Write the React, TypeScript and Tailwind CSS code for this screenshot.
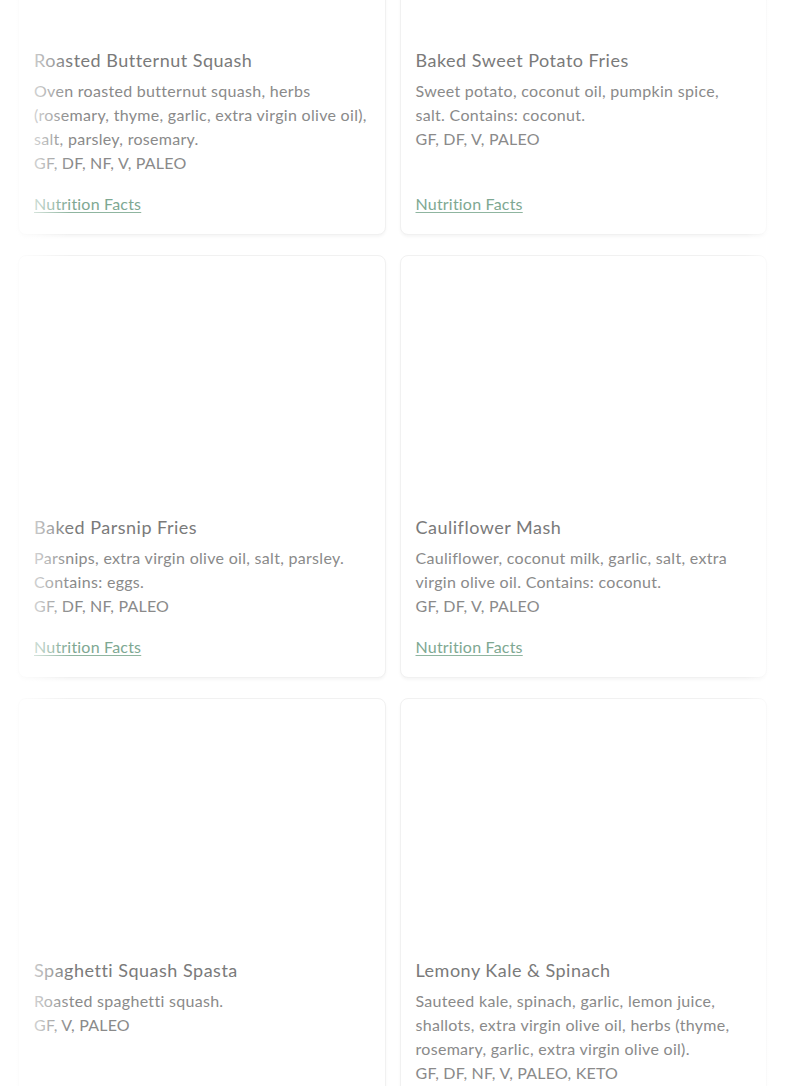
import React from 'react';

type Dish = {
  name: string;
  description: string;
  tags: string;
};

const dishes: Dish[] = [
  {
    name: 'Roasted Butternut Squash',
    description:
      'Oven roasted butternut squash, herbs (rosemary, thyme, garlic, extra virgin olive oil), salt, parsley, rosemary.',
    tags: 'GF, DF, NF, V, PALEO',
  },
  {
    name: 'Baked Sweet Potato Fries',
    description: 'Sweet potato, coconut oil, pumpkin spice, salt. Contains: coconut.',
    tags: 'GF, DF, V, PALEO',
  },
  {
    name: 'Baked Parsnip Fries',
    description: 'Parsnips, extra virgin olive oil, salt, parsley. Contains: eggs.',
    tags: 'GF, DF, NF, PALEO',
  },
  {
    name: 'Cauliflower Mash',
    description: 'Cauliflower, coconut milk, garlic, salt, extra virgin olive oil. Contains: coconut.',
    tags: 'GF, DF, V, PALEO',
  },
  {
    name: 'Spaghetti Squash Spasta',
    description: 'Roasted spaghetti squash.',
    tags: 'GF, V, PALEO',
  },
  {
    name: 'Lemony Kale & Spinach',
    description:
      'Sauteed kale, spinach, garlic, lemon juice, shallots, extra virgin olive oil, herbs (thyme, rosemary, garlic, extra virgin olive oil).',
    tags: 'GF, DF, NF, V, PALEO, KETO',
  },
];

const DishCard: React.FC<{ dish: Dish }> = ({ dish }) => (
  <div className="flex flex-col rounded-lg border border-[#f1f1f1] bg-white shadow-[0_2px_3px_rgba(0,0,0,0.04)]">
    {/* image slot, empty in the screenshot */}
    <div className="h-[248px] shrink-0" />
    <div className="flex flex-1 flex-col px-[15px] pt-[10px] pb-[18px]">
      <h3 className="text-[18px] leading-[26px] tracking-[0.5px] text-[#7a7a7a]">{dish.name}</h3>
      <p className="mt-[6px] text-[16px] leading-[24px] tracking-[0.3px] text-[#8a8a8a]">{dish.description}</p>
      <p className="text-[16px] leading-[24px] tracking-[0.2px] text-[#8a8a8a]">{dish.tags}</p>
      <div className="min-h-[17px] flex-1" />
      <a
        href="#"
        className="self-start text-[16px] leading-[24px] tracking-[0.2px] text-[#7ea892] underline underline-offset-2 decoration-[#8fb5a0]"
      >
        Nutrition Facts
      </a>
    </div>
  </div>
);

export default function App() {
  return (
    <div className="relative h-[1086px] overflow-hidden bg-white" style={{ fontFamily: 'Lato, "Open Sans", sans-serif' }}>
      <div className="-mt-[212px] grid grid-cols-2 gap-x-[14px] gap-y-[20px] px-[18px]">
        {dishes.map((dish) => (
          <DishCard key={dish.name} dish={dish} />
        ))}
      </div>
      {/* edge fades */}
      <div className="pointer-events-none absolute inset-y-0 left-0 w-[70px] bg-gradient-to-r from-white via-white/60 to-transparent" />
      <div className="pointer-events-none absolute inset-y-0 right-0 w-[40px] bg-gradient-to-l from-white via-white/60 to-transparent" />
    </div>
  );
}
